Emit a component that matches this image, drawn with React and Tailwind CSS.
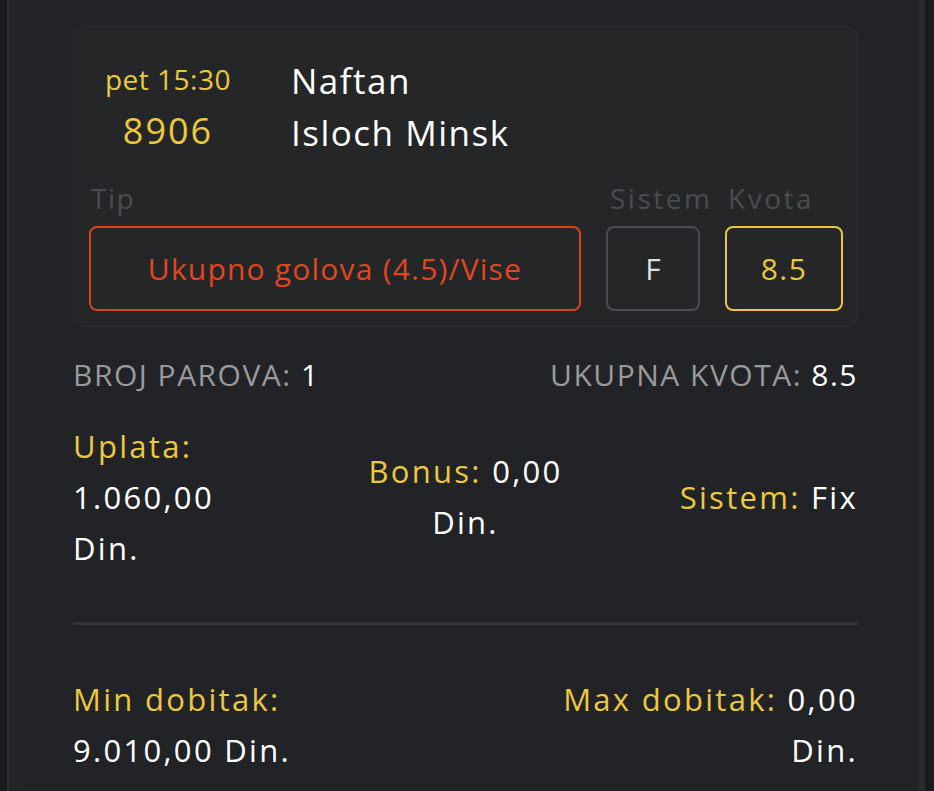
import React from 'react';

const card = {
    time: 'pet 15:30',
    code: '8906',
    home: 'Naftan',
    away: 'Isloch Minsk',
    tip: 'Ukupno golova (4.5)/Vise',
    sistem: 'F',
    kvota: '8.5',
};

function App() {
    return (
        <div className="min-h-screen h-[791px] overflow-hidden flex bg-[#1b1c1e] font-['Open_Sans',sans-serif]">
            <div className="w-[7px] bg-[#1a1b1d]" />
            <div className="w-[2px] bg-[#2c2d30]" />
            <div className="w-[16px] bg-[#242528]" />
            <div className="w-[893px] bg-[#222326] pl-[48px] pr-[60px] pt-[26px]">
                <div className="rounded-[12px] border border-[#2f3033] bg-[#252628] pl-[15px] pr-[14px] pt-[30px] pb-[15px]">
                    <div className="flex">
                        <div className="w-[158px] flex flex-col items-center text-[#ecc83e]">
                            <span className="text-[28px] leading-[48px] -mt-[2px] tracking-[0.5px]">{card.time}</span>
                            <span className="text-[36px] leading-[56px] tracking-[2px]">{card.code}</span>
                        </div>
                        <div className="flex flex-col text-white text-[35px] tracking-[1.5px] pl-[44px]">
                            <span className="leading-[48px]">{card.home}</span>
                            <span className="leading-[56px]">{card.away}</span>
                        </div>
                    </div>
                    <div className="flex gap-[25px] mt-[16px]">
                        <div className="flex-1 flex flex-col">
                            <span className="text-[28px] leading-[42px] mb-[7px] tracking-[1.5px] text-[#4b4c4f] pl-[2px]">Tip</span>
                            <div className="h-[85px] rounded-[8px] border-[2.5px] border-[#d9421f] flex items-center justify-center text-[#e0461f] text-[30px] tracking-[1.2px]">{card.tip}</div>
                        </div>
                        <div className="w-[94px] flex flex-col">
                            <span className="text-[28px] leading-[42px] mb-[7px] tracking-[2.5px] text-[#4b4c4f] whitespace-nowrap pl-[4px]">Sistem</span>
                            <div className="w-[94px] h-[85px] rounded-[8px] border-[2.5px] border-[#4a4b4e] flex items-center justify-center text-[#dedede] text-[30px]">{card.sistem}</div>
                        </div>
                        <div className="w-[118px] flex flex-col">
                            <span className="text-[28px] leading-[42px] mb-[7px] tracking-[2.5px] text-[#4b4c4f] pl-[3px]">Kvota</span>
                            <div className="h-[85px] rounded-[8px] border-[2.5px] border-[#ecc83e] flex items-center justify-center text-[#ecc83e] text-[30px] tracking-[1.5px]">{card.kvota}</div>
                        </div>
                    </div>
                </div>

                <div className="text-[31px] tracking-[2.3px]">
                    <div className="flex justify-between mt-[27px] leading-[42px] text-[30px] tracking-[1.5px]">
                        <span className="text-[#9a9a9c]">BROJ PAROVA: <span className="text-white">1</span></span>
                        <span className="text-[#9a9a9c]">UKUPNA KVOTA: <span className="text-white">8.5</span></span>
                    </div>

                    <div className="grid grid-cols-3 mt-[25px] leading-[51px]">
                        <div className="flex flex-col">
                            <span className="text-[#ecc83e]">Uplata:</span>
                            <span className="text-white">1.060,00</span>
                            <span className="text-white">Din.</span>
                        </div>
                        <div className="flex flex-col items-center justify-center text-center -mt-[2px]">
                            <span className="whitespace-nowrap"><span className="text-[#ecc83e]">Bonus:</span> <span className="text-white">0,00</span></span>
                            <span className="text-white">Din.</span>
                        </div>
                        <div className="flex items-center justify-end">
                            <span className="whitespace-nowrap"><span className="text-[#ecc83e]">Sistem:</span> <span className="text-white">Fix</span></span>
                        </div>
                    </div>

                    <div className="h-[3px] bg-[#333437] mt-[48px]" />

                    <div className="flex justify-between mt-[49px] leading-[51px]">
                        <div className="flex flex-col">
                            <span className="text-[#ecc83e]">Min dobitak:</span>
                            <span className="text-white">9.010,00 Din.</span>
                        </div>
                        <div className="flex flex-col items-end">
                            <span className="whitespace-nowrap"><span className="text-[#ecc83e]">Max dobitak:</span> <span className="text-white">0,00</span></span>
                            <span className="text-white">Din.</span>
                        </div>
                    </div>
                </div>
            </div>
            <div className="w-[7px] bg-[#2a2b2e]" />
            <div className="flex-1 bg-[#1a1b1d]" />
        </div>
    );
}

export default App;
